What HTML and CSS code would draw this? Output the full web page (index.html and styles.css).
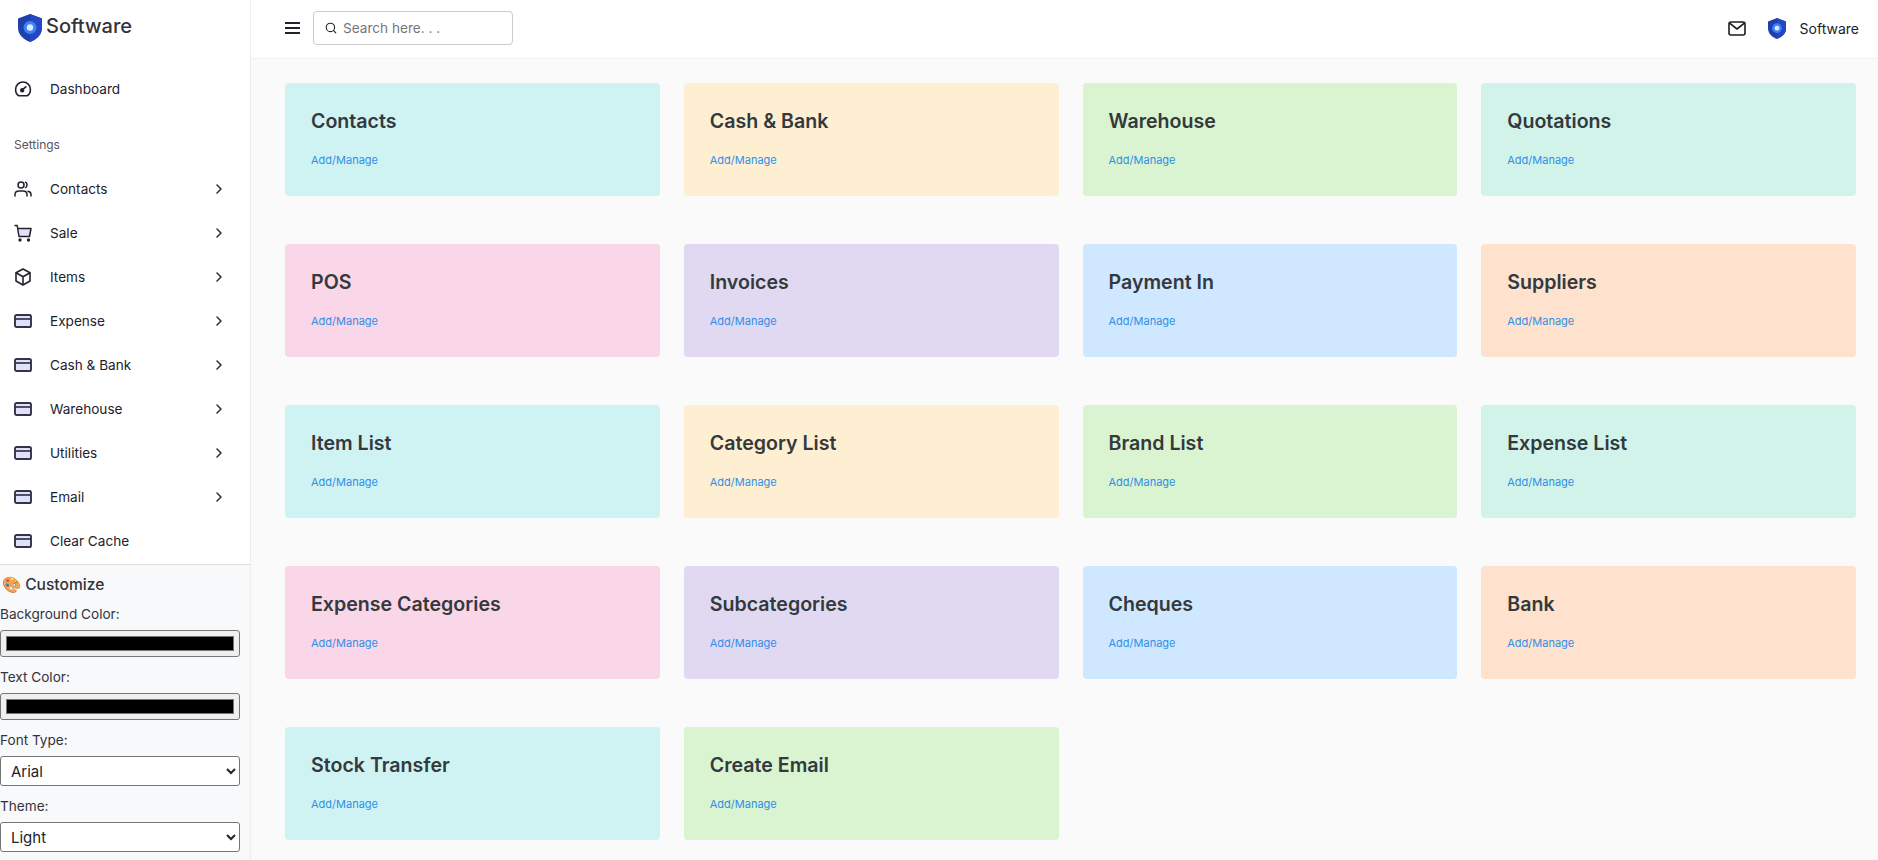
FILE: index.html
```html
<!DOCTYPE html>
<html lang="en">

<head>
    <meta charset="UTF-8">
    <meta name="viewport" content="width=device-width, initial-scale=1.0">
    <title>Software</title>
    <link rel="stylesheet" href="styles.css">
</head>

<body>
    <svg class="defs" width="0" height="0">
        <symbol id="shield" viewBox="0 0 24 28">
            <path d="M12 0 L24 4.5 V14 C24 20.5 18.5 25.5 12 28 C5.5 25.5 0 20.5 0 14 V4.5 Z" fill="#1e40af"/>
            <path d="M12 0 L24 4.5 V14 C24 20.5 18.5 25.5 12 28 Z" fill="#2347c5"/>
            <circle cx="12" cy="13.5" r="6.5" fill="#3b82f6"/>
            <circle cx="12" cy="13.5" r="3.2" fill="#dbeafe"/>
        </symbol>
        <symbol id="card" viewBox="0 0 18 14">
            <rect x="1" y="1" width="16" height="12" rx="1.6" fill="#e0e0fa" stroke="#33334a" stroke-width="1.9"/>
            <path d="M1 5 H17" stroke="#33334a" stroke-width="1.7"/>
        </symbol>
        <symbol id="chev" viewBox="0 0 8 12">
            <path d="M2 2 L6 6 L2 10" fill="none" stroke="#2b2b33" stroke-width="1.5" stroke-linecap="round" stroke-linejoin="round"/>
        </symbol>
    </svg>

    <aside class="sidebar">
        <div class="brand">
            <svg class="brand-logo"><use href="#shield"/></svg>
            <span>Software</span>
        </div>

        <nav class="menu">
            <a class="menu-item dash">
                <svg class="ico" viewBox="0 0 18 18" fill="none" stroke="#22222a" stroke-width="1.6">
                    <path d="M5 15.8 C2.8 14.6 1.6 12 1.6 9.4 A7.4 7.4 0 0 1 16.4 9.4 C16.4 12 15.2 14.6 13 15.8 Z" stroke-linejoin="round"/>
                    <path d="M8 10.2 L11.8 6.8" stroke-linecap="round"/>
                    <circle cx="8.2" cy="10.2" r="1.4" fill="#22222a"/>
                </svg>
                <span class="label">Dashboard</span>
            </a>

            <div class="menu-title">Settings</div>

            <a class="menu-item">
                <svg class="ico" viewBox="0 0 18 16" fill="none" stroke="#22222a" stroke-width="1.5" stroke-linecap="round">
                    <circle cx="7" cy="4" r="3"/>
                    <path d="M1 15 V13.5 C1 11 3 10 5 10 H9 C11 10 13 11 13 13.5 V15"/>
                    <path d="M11.5 1.2 C13.5 1.6 13.5 6 11.5 6.6"/>
                    <path d="M14 10.2 C16 10.6 17 12 17 13.5 V15"/>
                </svg>
                <span class="label">Contacts</span>
                <svg class="chev"><use href="#chev"/></svg>
            </a>
            <a class="menu-item">
                <svg class="ico" viewBox="0 0 18 18" fill="none" stroke="#22222a" stroke-width="1.5" stroke-linecap="round" stroke-linejoin="round">
                    <path d="M3.8 4.5 H17 L15.5 12.5 H5 Z" fill="#e0e0fa" stroke="none"/>
                    <path d="M1 1.5 H3.2 L5 12.5 H15.5 L17 4.5 H3.8"/>
                    <circle cx="6" cy="16" r="0.9" fill="#22222a"/>
                    <circle cx="14.5" cy="16" r="0.9" fill="#22222a"/>
                </svg>
                <span class="label">Sale</span>
                <svg class="chev"><use href="#chev"/></svg>
            </a>
            <a class="menu-item">
                <svg class="ico" viewBox="0 0 16 18" fill="none" stroke="#22222a" stroke-width="1.6" stroke-linejoin="round">
                    <path d="M8 1 L15 4.8 V13 L8 17 L1 13 V4.8 Z"/>
                    <path d="M1 4.8 L8 8.8 L15 4.8 M8 8.8 V17"/>
                </svg>
                <span class="label">Items</span>
                <svg class="chev"><use href="#chev"/></svg>
            </a>
            <a class="menu-item"><svg class="ico"><use href="#card"/></svg><span class="label">Expense</span><svg class="chev"><use href="#chev"/></svg></a>
            <a class="menu-item"><svg class="ico"><use href="#card"/></svg><span class="label">Cash &amp; Bank</span><svg class="chev"><use href="#chev"/></svg></a>
            <a class="menu-item"><svg class="ico"><use href="#card"/></svg><span class="label">Warehouse</span><svg class="chev"><use href="#chev"/></svg></a>
            <a class="menu-item"><svg class="ico"><use href="#card"/></svg><span class="label">Utilities</span><svg class="chev"><use href="#chev"/></svg></a>
            <a class="menu-item"><svg class="ico"><use href="#card"/></svg><span class="label">Email</span><svg class="chev"><use href="#chev"/></svg></a>
            <a class="menu-item"><svg class="ico"><use href="#card"/></svg><span class="label">Clear Cache</span></a>
        </nav>

        <div class="customize">
            <h3>🎨 Customize</h3>
            <label>Background Color:</label>
            <input type="color" value="#000000">
            <label>Text Color:</label>
            <input type="color" value="#000000">
            <label>Font Type:</label>
            <select>
                <option>Arial</option>
            </select>
            <label>Theme:</label>
            <select>
                <option>Light</option>
            </select>
        </div>
    </aside>

    <div class="main">
        <header class="topbar">
            <div class="burger"><span></span><span></span><span></span></div>
            <div class="search">
                <svg viewBox="0 0 12 12" fill="none" stroke="#22222a" stroke-width="1.1" stroke-linecap="round">
                    <circle cx="5.4" cy="5.4" r="4.2"/>
                    <path d="M8.6 8.6 L10.8 10.8"/>
                </svg>
                <span>Search here. . .</span>
            </div>
            <div class="top-right">
                <svg class="mail" viewBox="0 0 18 15" fill="none" stroke="#1c1c22" stroke-width="1.6" stroke-linejoin="round">
                    <rect x="1" y="1" width="16" height="13" rx="2"/>
                    <path d="M1.6 2.2 L9 8 L16.4 2.2"/>
                </svg>
                <svg class="top-logo"><use href="#shield"/></svg>
                <span>Software</span>
            </div>
        </header>

        <main class="tiles">
            <div class="tile cyan"><h4>Contacts</h4><a>Add/Manage</a></div>
            <div class="tile cream"><h4>Cash &amp; Bank</h4><a>Add/Manage</a></div>
            <div class="tile green"><h4>Warehouse</h4><a>Add/Manage</a></div>
            <div class="tile mint"><h4>Quotations</h4><a>Add/Manage</a></div>

            <div class="tile pink"><h4>POS</h4><a>Add/Manage</a></div>
            <div class="tile purple"><h4>Invoices</h4><a>Add/Manage</a></div>
            <div class="tile blue"><h4>Payment In</h4><a>Add/Manage</a></div>
            <div class="tile peach"><h4>Suppliers</h4><a>Add/Manage</a></div>

            <div class="tile cyan"><h4>Item List</h4><a>Add/Manage</a></div>
            <div class="tile cream"><h4>Category List</h4><a>Add/Manage</a></div>
            <div class="tile green"><h4>Brand List</h4><a>Add/Manage</a></div>
            <div class="tile mint"><h4>Expense List</h4><a>Add/Manage</a></div>

            <div class="tile pink"><h4>Expense Categories</h4><a>Add/Manage</a></div>
            <div class="tile purple"><h4>Subcategories</h4><a>Add/Manage</a></div>
            <div class="tile blue"><h4>Cheques</h4><a>Add/Manage</a></div>
            <div class="tile peach"><h4>Bank</h4><a>Add/Manage</a></div>

            <div class="tile cyan"><h4>Stock Transfer</h4><a>Add/Manage</a></div>
            <div class="tile green"><h4>Create Email</h4><a>Add/Manage</a></div>
        </main>
    </div>
</body>

</html>
```

FILE: styles.css
```css
* {
    box-sizing: border-box;
}

body {
    display: flex;
    margin: 0;
    height: 860px;
    overflow: hidden;
    background-color: #fafafa;
    color: #22222a;
    font-family: 'Inter', 'Liberation Sans', sans-serif;
}

.defs {
    position: absolute;
}

.sidebar {
    display: flex;
    flex-direction: column;
    flex: 0 0 251px;
    height: 860px;
    background-color: #fff;
    border-right: 1px solid #eee;
}

.brand {
    display: flex;
    flex: none;
    align-items: center;
    gap: 4px;
    height: 54px;
    padding-left: 18px;
    padding-bottom: 2px;
    font-size: 20px;
    font-weight: 500;
    color: #33333d;
}

.brand-logo {
    width: 24px;
    height: 28px;
    margin-top: 4px;
}

.menu {
    flex: none;
    padding: 0 14px;
    height: 510px;
}

.menu-item {
    display: flex;
    align-items: center;
    height: 44px;
    font-size: 13.6px;
}

.dash {
    margin-top: 13px;
}

.ico {
    flex: 0 0 18px;
    width: 18px;
    height: 18px;
    margin-right: 18px;
}

.label {
    flex: 1;
}

.chev {
    width: 8px;
    height: 12px;
    margin-right: 13px;
}

.menu-title {
    margin-top: 26px;
    margin-bottom: 15px;
    font-size: 12px;
    color: #55555f;
}

.customize {
    flex: 1;
    min-height: 0;
    background-color: #f8f9fa;
    border-top: 1px solid #ddd;
    padding-right: 10px;
}

.customize h3 {
    margin: 10px 0 11px 2px;
    font-size: 15.6px;
    font-weight: 500;
    color: #33333d;
    line-height: 20px;
}

.customize label {
    display: block;
    font-size: 13.6px;
    line-height: 17px;
    color: #33333d;
    margin-bottom: 7px;
}

.customize input[type="color"] {
    display: block;
    width: 240px;
    height: 27px;
    padding: 5px;
    margin-bottom: 12px;
    background-color: #efefef;
    border: 1px solid #767676;
    border-radius: 3px;
}

.customize input[type="color"]::-webkit-color-swatch-wrapper {
    padding: 0;
}

.customize input[type="color"]::-webkit-color-swatch {
    border: 1px solid #767676;
}

.customize select {
    display: block;
    width: 240px;
    height: 30px;
    padding: 0 6px;
    margin-bottom: 12px;
    background-color: #fff;
    border: 1px solid #767676;
    border-radius: 3px;
    font-family: inherit;
    font-size: 15px;
    color: #22222a;
}

.main {
    flex: 1;
    min-width: 0;
}

.topbar {
    display: flex;
    align-items: center;
    height: 59px;
    padding: 0 19px 2px 34px;
    background-color: #fff;
    border-bottom: 1px solid #f0f0f0;
}

.burger {
    display: flex;
    flex-direction: column;
    gap: 3px;
    width: 15px;
    margin-right: 13px;
}

.burger span {
    display: block;
    height: 2px;
    background-color: #22222a;
}

.search {
    display: flex;
    align-items: center;
    gap: 6px;
    width: 200px;
    height: 34px;
    padding-left: 11px;
    border: 1px solid #ccc;
    border-radius: 4px;
    font-size: 13.6px;
    color: #777;
}

.search svg {
    width: 12px;
    height: 12px;
}

.top-right {
    display: flex;
    align-items: center;
    margin-left: auto;
    font-size: 14px;
    font-weight: 400;
}

.mail {
    width: 18px;
    height: 15px;
    margin-right: 22px;
}

.top-logo {
    width: 18px;
    height: 21px;
    margin-right: 14px;
}

.tiles {
    display: grid;
    grid-template-columns: repeat(4, 1fr);
    grid-auto-rows: 113px;
    column-gap: 24px;
    row-gap: 48px;
    padding: 24px 22px 0 34px;
}

.tile {
    padding: 26px 26px 0;
    border-radius: 4px;
}

.tile h4 {
    margin: 0 0 20px;
    font-size: 19.6px;
    line-height: 24px;
    font-weight: 580;
    color: #33393d;
}

.tile a {
    display: block;
    font-size: 11px;
    line-height: 14px;
    color: #2f8fe8;
}

.cyan { background-color: #cff3f3; }
.cream { background-color: #feefd2; }
.green { background-color: #daf3d1; }
.mint { background-color: #d2f3ea; }
.pink { background-color: #f9d6e8; }
.purple { background-color: #e1d9f2; }
.blue { background-color: #d0e8ff; }
.peach { background-color: #fee2cd; }
```
